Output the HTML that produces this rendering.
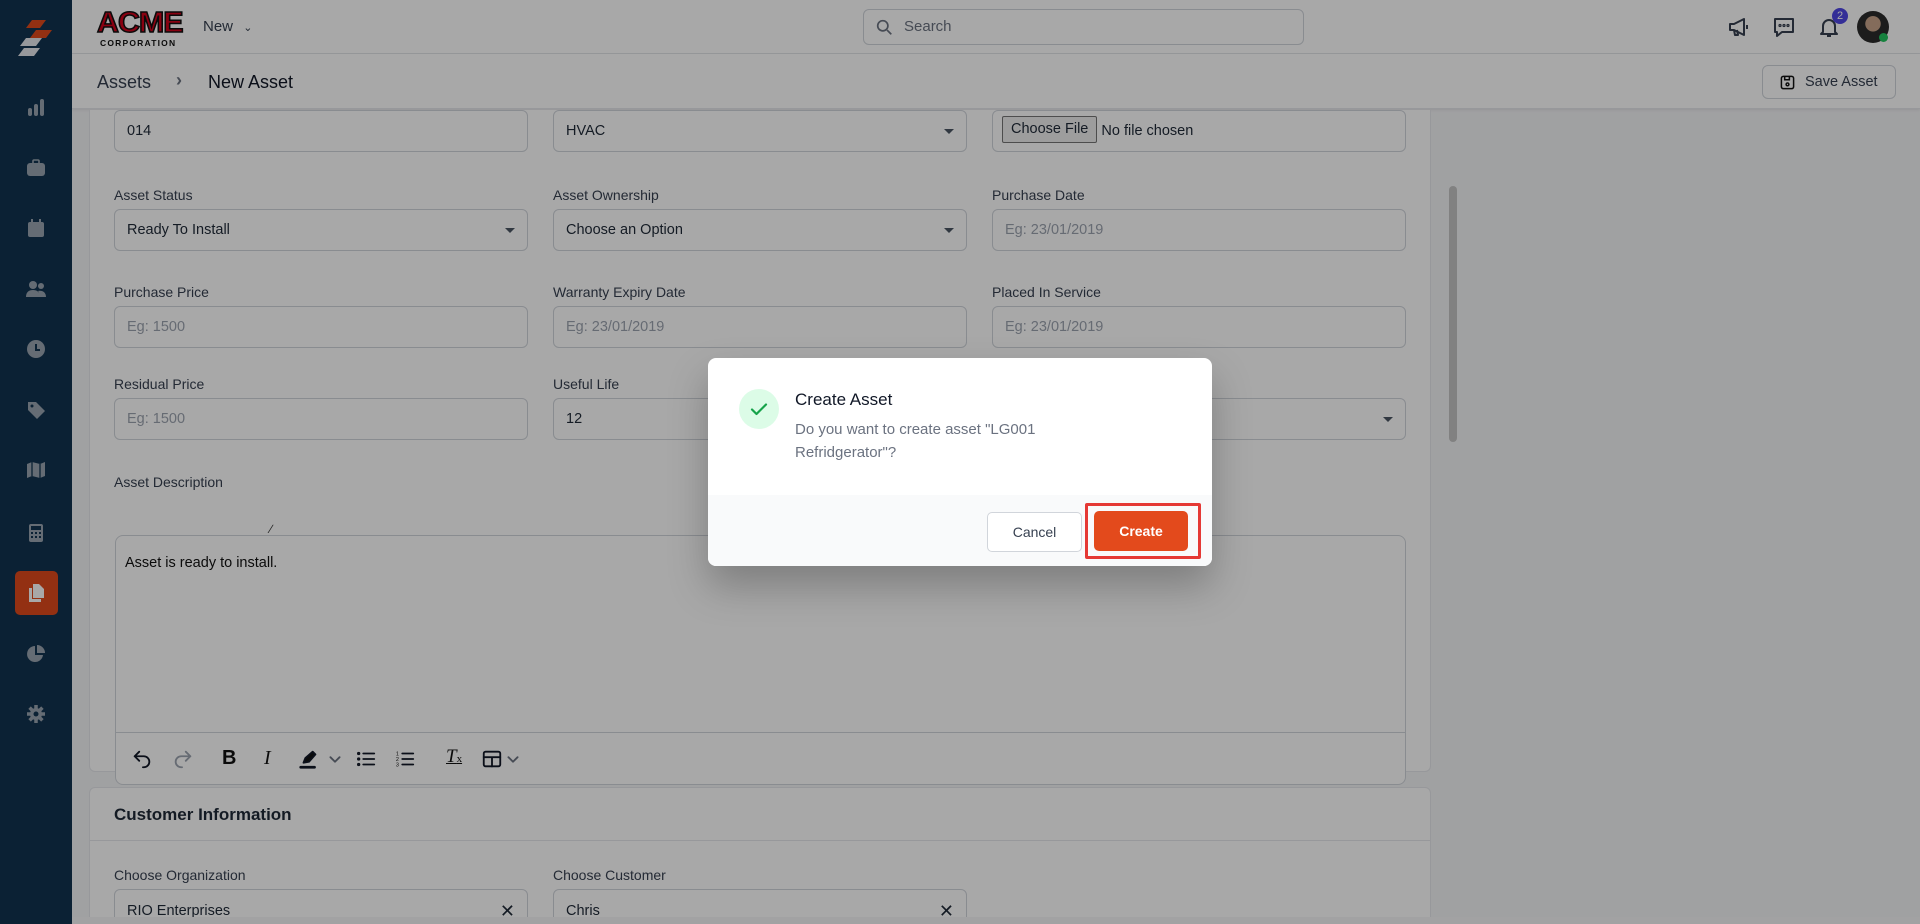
<!DOCTYPE html>
<html style="overflow:hidden;width:1920px;height:924px"><head><meta charset="utf-8">
<style>
*{box-sizing:border-box;margin:0;padding:0}
body{width:1920px;height:924px;overflow:hidden;background:#f3f4f6;font-family:"Liberation Sans",Arial,sans-serif;color:#1f2937}
#root{position:relative;width:1920px;height:924px;overflow:hidden}
.abs{position:absolute}
.side{left:0;top:0;width:72px;height:924px;background:#12334f}
.side svg{position:absolute;left:26px;width:20px;height:20px;fill:#9aa5b1}
.top{left:72px;top:0;width:1848px;height:54px;background:#fff;border-bottom:1px solid #e5e7eb}
.crumb{left:72px;top:54px;width:1848px;height:55px;background:#fff;border-bottom:1px solid #e5e7eb;box-shadow:0 1px 3px rgba(0,0,0,.08)}
.card{background:#fff;border:1px solid #e5e7eb;border-radius:6px}
.lbl{font-size:14px;color:#374151}
.inp{height:42px;border:1px solid #d1d5db;border-radius:6px;background:#fff;font-size:14.5px;padding-left:12px;line-height:40px;color:#1f2937}
.ph{color:#9ca3af}
.caret{position:absolute;right:12px;top:18px;width:0;height:0;border-left:5px solid transparent;border-right:5px solid transparent;border-top:5px solid #4b5563}
.ov{left:0;top:0;width:1920px;height:924px;background:rgba(0,0,0,.34)}
.tb svg{position:absolute;top:748px;width:22px;height:22px;fill:none;stroke:#111827;stroke-width:2;stroke-linecap:round;stroke-linejoin:round}
</style></head><body><div id="root">

<div class="abs side">
 <svg style="top:18px;left:16px;width:40px;height:40px" viewBox="0 0 40 40"><polygon points="16,2 30,2 24,10 10,10" fill="#e04a1c"/><polygon points="20,12 36,12 30,20 14,20" fill="#e04a1c"/><polygon points="10,20 26,20 20,28 4,28" fill="#e5e7eb"/><polygon points="8,30 24,30 18,38 2,38" fill="#e5e7eb"/></svg>
 <svg style="top:97px" viewBox="0 0 20 20"><rect x="2" y="11" width="4" height="8" rx="2"/><rect x="8" y="7" width="4" height="12" rx="2"/><rect x="14" y="2" width="4" height="17" rx="2"/></svg>
 <svg style="top:158px" viewBox="0 0 20 20"><rect x="1" y="5" width="18" height="13" rx="3"/><rect x="7" y="2" width="6" height="4" rx="1" fill="none" stroke="#9aa5b1" stroke-width="1.6"/></svg>
 <svg style="top:218px" viewBox="0 0 20 20"><rect x="2" y="4" width="16" height="15" rx="2"/><rect x="5" y="1" width="2" height="5"/><rect x="13" y="1" width="2" height="5"/></svg>
 <svg style="top:279px" viewBox="0 0 20 20"><circle cx="7" cy="6" r="4"/><circle cx="15" cy="7" r="3"/><path d="M0 18c0-5 3-7 7-7s7 2 7 7z"/><path d="M13 18c0-3 0-5 -1-6 4-1 8 1 8 6z"/></svg>
 <svg style="top:339px" viewBox="0 0 20 20"><circle cx="10" cy="10" r="9"/><path d="M10 5v6h4" stroke="#12334f" stroke-width="2" fill="none"/></svg>
 <svg style="top:400px" viewBox="0 0 20 20"><path d="M2 2h8l9 9-8 8-9-9z"/><circle cx="6" cy="6" r="1.5" fill="#12334f"/></svg>
 <svg style="top:460px" viewBox="0 0 20 20"><path d="M1 4l5-2 8 2 5-2v14l-5 2-8-2-5 2z"/><path d="M6 2v14M14 4v14" stroke="#12334f" stroke-width="1.3"/></svg>
 <svg style="top:523px" viewBox="0 0 20 20"><rect x="3" y="1" width="14" height="18" rx="2"/><rect x="5" y="3" width="10" height="4" fill="#12334f"/><g fill="#12334f"><rect x="5" y="9" width="2" height="2"/><rect x="9" y="9" width="2" height="2"/><rect x="13" y="9" width="2" height="2"/><rect x="5" y="13" width="2" height="2"/><rect x="9" y="13" width="2" height="2"/><rect x="13" y="13" width="2" height="2"/></g></svg>
 <div class="abs" style="left:15px;top:571px;width:43px;height:44px;background:#e04a1c;border-radius:5px"></div>
 <svg style="top:583px;fill:#fff" viewBox="0 0 20 20"><path d="M7 1h6l5 5v9H7z"/><path d="M3 5h3v11h9v3H3z"/></svg>
 <svg style="top:644px" viewBox="0 0 20 20"><path d="M9 2a8 8 0 1 0 8 9H9z"/><path d="M11 1a8 8 0 0 1 8 8h-8z"/></svg>
 <svg style="top:704px" viewBox="0 0 20 20"><circle cx="10" cy="10" r="6"/><g stroke="#9aa5b1" stroke-width="3.5"><path d="M10 1v18M1 10h18M3.6 3.6l12.8 12.8M16.4 3.6L3.6 16.4"/></g><circle cx="10" cy="10" r="2.5" fill="#12334f"/></svg>
</div>

<div class="abs top">
 <div class="abs" style="left:25px;top:9px;font:900 29px/29px 'Liberation Sans',sans-serif;color:#d0021b;letter-spacing:-1px;-webkit-text-stroke:1.5px #111;transform:scaleX(1.05);transform-origin:left">ACME</div>
 <div class="abs" style="left:28px;top:38px;font:900 8.5px 'Liberation Sans',sans-serif;color:#111;letter-spacing:1.2px">CORPORATION</div>
 <div class="abs" style="left:131px;top:18px;font-size:15px;color:#374151">New <span style="font-size:11px;margin-left:6px">&#8964;</span></div>
 <div class="abs" style="left:791px;top:9px;width:441px;height:36px;border:1px solid #d1d5db;border-radius:6px;background:#fff">
  <svg class="abs" style="left:12px;top:9px" width="17" height="17" viewBox="0 0 20 20" fill="none" stroke="#6b7280" stroke-width="2"><circle cx="8" cy="8" r="6"/><path d="M13 13l5 5"/></svg>
  <span class="abs" style="left:40px;top:8px;font-size:15px;color:#6b7280">Search</span>
 </div>
 <svg class="abs" style="left:1655px;top:15px" width="24" height="24" viewBox="0 0 24 24" fill="none" stroke="#374151" stroke-width="2" stroke-linejoin="round"><path d="M3 9h4l10-5v16L7 15H3z"/><path d="M7 15l1 5h3l-1-5M20 10v4"/></svg>
 <svg class="abs" style="left:1700px;top:15px" width="24" height="24" viewBox="0 0 24 24" fill="none" stroke="#374151" stroke-width="2" stroke-linejoin="round"><path d="M3 4h18v13H10l-5 4v-4H3z"/><circle cx="8" cy="10.5" r=".6"/><circle cx="12" cy="10.5" r=".6"/><circle cx="16" cy="10.5" r=".6"/></svg>
 <svg class="abs" style="left:1745px;top:15px" width="24" height="24" viewBox="0 0 24 24" fill="none" stroke="#374151" stroke-width="2" stroke-linejoin="round"><path d="M6 17V11a6 6 0 0 1 12 0v6l2 2H4z"/><path d="M10 21h4"/></svg>
 <div class="abs" style="left:1760px;top:8px;width:16px;height:16px;border-radius:50%;background:#4f46e5;color:#fff;font-size:11px;text-align:center;line-height:16px">2</div>
 <div class="abs" style="left:1785px;top:11px;width:32px;height:32px;border-radius:50%;background:radial-gradient(circle at 50% 40%,#c9a58a 0 30%,#2b2b2b 32%)"></div>
 <div class="abs" style="left:1807px;top:33px;width:9px;height:9px;border-radius:50%;background:#22c55e"></div>
</div>

<div class="abs crumb">
 <span class="abs" style="left:25px;top:18px;font-size:18px;color:#374151">Assets</span>
 <span class="abs" style="left:104px;top:16px;font-size:18px;color:#6b7280;font-weight:bold">&#8250;</span>
 <span class="abs" style="left:136px;top:18px;font-size:18px;color:#111827">New Asset</span>
 <div class="abs" style="left:1690px;top:11px;width:134px;height:34px;border:1px solid #d1d5db;border-radius:6px;background:#fff">
  <svg class="abs" style="left:17px;top:9px" width="15" height="15" viewBox="0 0 16 16" fill="none" stroke="#111" stroke-width="1.6"><rect x="1.5" y="1.5" width="13" height="13" rx="2"/><path d="M5 2v3h5V2"/><circle cx="8" cy="10" r="1.5"/></svg>
  <span class="abs" style="left:42px;top:8px;font-size:14.5px;color:#374151">Save Asset</span>
 </div>
</div>

<div class="abs" style="left:72px;top:110px;width:1848px;height:814px;overflow:hidden">
 <div class="abs card" style="left:17px;top:-20px;width:1342px;height:682px"></div>
 <div class="abs" style="left:1377px;top:76px;width:8px;height:256px;background:#c4c4c4;border-radius:4px"></div>
</div>
<div class="abs inp" style="left:114px;top:110px;width:414px">014</div>
<div class="abs inp" style="left:553px;top:110px;width:414px">HVAC<span class="caret"></span></div>
<div class="abs inp" style="left:992px;top:110px;width:414px;padding-left:9px"><span style="display:inline-block;border:1px solid #767676;background:#efefef;border-radius:2px;height:27px;line-height:25px;padding:0 8px;font-size:14.5px;vertical-align:middle;margin-top:-3px">Choose File</span> No file chosen</div>

<div class="abs lbl" style="left:114px;top:187px">Asset Status</div>
<div class="abs lbl" style="left:553px;top:187px">Asset Ownership</div>
<div class="abs lbl" style="left:992px;top:187px">Purchase Date</div>
<div class="abs inp" style="left:114px;top:209px;width:414px">Ready To Install<span class="caret"></span></div>
<div class="abs inp" style="left:553px;top:209px;width:414px">Choose an Option<span class="caret"></span></div>
<div class="abs inp ph" style="left:992px;top:209px;width:414px">Eg: 23/01/2019</div>

<div class="abs lbl" style="left:114px;top:284px">Purchase Price</div>
<div class="abs lbl" style="left:553px;top:284px">Warranty Expiry Date</div>
<div class="abs lbl" style="left:992px;top:284px">Placed In Service</div>
<div class="abs inp ph" style="left:114px;top:306px;width:414px">Eg: 1500</div>
<div class="abs inp ph" style="left:553px;top:306px;width:414px">Eg: 23/01/2019</div>
<div class="abs inp ph" style="left:992px;top:306px;width:414px">Eg: 23/01/2019</div>

<div class="abs lbl" style="left:114px;top:376px">Residual Price</div>
<div class="abs lbl" style="left:553px;top:376px">Useful Life</div>
<div class="abs inp ph" style="left:114px;top:398px;width:414px">Eg: 1500</div>
<div class="abs inp" style="left:553px;top:398px;width:414px">12</div>
<div class="abs inp" style="left:992px;top:398px;width:414px"><span class="caret"></span></div>

<div class="abs lbl" style="left:114px;top:474px">Asset Description</div>
<div class="abs" style="left:270px;top:522px;font-size:12px;color:#333">&#8725;</div>
<div class="abs" style="left:115px;top:535px;width:1291px;height:250px;border:1px solid #d1d5db;border-radius:8px;background:#fff">
 <div class="abs" style="left:9px;top:19px;font-size:14.5px;color:#111">Asset is ready to install.</div>
 <div class="abs" style="left:0;top:196px;width:100%;border-top:1px solid #d1d5db"></div>
</div>
<div class="tb">
 <svg style="left:131px" viewBox="0 0 24 24"><path d="M9 14L4 9l5-5"/><path d="M4 9h10a6 6 0 0 1 0 12h-1"/></svg>
 <svg style="left:172px;stroke:#9ca3af" viewBox="0 0 24 24"><path d="M15 14l5-5-5-5"/><path d="M20 9H10a6 6 0 0 0 0 12h1"/></svg>
 <div class="abs" style="left:222px;top:747px;font:bold 20px 'Liberation Sans';color:#111">B</div>
 <div class="abs" style="left:264px;top:747px;font:italic 20px 'Liberation Serif';color:#111">I</div>
 <svg style="left:298px" viewBox="0 0 24 24"><path d="M6 16l2-5 8-7 3 3-7 8z" fill="#111"/><path d="M3 21h15" stroke-width="3"/></svg>
 <svg style="left:328px;stroke:#6b7280;width:14px" viewBox="0 0 14 24"><path d="M2 10l5 5 5-5"/></svg>
 <svg style="left:355px" viewBox="0 0 24 24"><path d="M9 6h12M9 12h12M9 18h12"/><circle cx="4" cy="6" r=".8"/><circle cx="4" cy="12" r=".8"/><circle cx="4" cy="18" r=".8"/></svg>
 <svg style="left:394px" viewBox="0 0 24 24"><path d="M9 6h12M9 12h12M9 18h12"/><text x="2" y="8" font-size="6" fill="#111" stroke="none">1</text><text x="2" y="14" font-size="6" fill="#111" stroke="none">2</text><text x="2" y="20" font-size="6" fill="#111" stroke="none">3</text></svg>
 <div class="abs" style="left:446px;top:746px;font:italic 19px 'Liberation Serif';color:#111;text-decoration:underline">T<span style="font-size:11px;font-style:normal">x</span></div>
 <svg style="left:481px" viewBox="0 0 24 24"><rect x="3" y="4" width="18" height="16" rx="2"/><path d="M3 10h18M12 10v10" /></svg>
 <svg style="left:506px;stroke:#6b7280;width:14px" viewBox="0 0 14 24"><path d="M2 10l5 5 5-5"/></svg>
</div>

<div class="abs card" style="left:89px;top:787px;width:1342px;height:140px">
 <div class="abs" style="left:24px;top:17px;font-size:17px;font-weight:bold;color:#1f2937">Customer Information</div>
 <div class="abs" style="left:0;top:52px;width:100%;border-top:1px solid #e5e7eb"></div>
</div>
<div class="abs lbl" style="left:114px;top:867px">Choose Organization</div>
<div class="abs lbl" style="left:553px;top:867px">Choose Customer</div>
<div class="abs inp" style="left:114px;top:889px;width:414px;line-height:42px">RIO Enterprises<span class="abs" style="right:12px;top:0;font-size:18px">&#10005;</span></div>
<div class="abs inp" style="left:553px;top:889px;width:414px;line-height:42px">Chris<span class="abs" style="right:12px;top:0;font-size:18px">&#10005;</span></div>
<div class="abs" style="left:72px;top:917px;width:1848px;height:7px;background:#f6f6f7"></div>

<div class="abs ov"></div>

<div class="abs" style="left:708px;top:358px;width:504px;height:208px;background:#fff;border-radius:8px;box-shadow:0 20px 40px rgba(0,0,0,.25);overflow:hidden">
 <div class="abs" style="left:31px;top:31px;width:40px;height:40px;border-radius:50%;background:#dcfce7"></div>
 <svg class="abs" style="left:41px;top:41px" width="20" height="20" viewBox="0 0 20 20" fill="none" stroke="#16a34a" stroke-width="2.2" stroke-linecap="round" stroke-linejoin="round"><path d="M3 10.5l4.5 4.5L17 5.5"/></svg>
 <div class="abs" style="left:87px;top:32px;font-size:17px;color:#111827">Create Asset</div>
 <div class="abs" style="left:87px;top:60px;width:330px;font-size:15px;line-height:23px;color:#6b7280">Do you want to create asset "LG001 Refridgerator"?</div>
 <div class="abs" style="left:0;top:137px;width:504px;height:71px;background:#f9fafb"></div>
 <div class="abs" style="left:279px;top:154px;width:95px;height:40px;border:1px solid #d1d5db;border-radius:5px;background:#fff;font-size:14px;color:#374151;text-align:center;line-height:38px">Cancel</div>
 <div class="abs" style="left:377px;top:145px;width:116px;height:56px;border:3px solid #e53935;border-radius:2px"></div>
 <div class="abs" style="left:386px;top:153px;width:94px;height:40px;border-radius:5px;background:#e34a1c;font-size:14px;font-weight:bold;color:#fff;text-align:center;line-height:40px">Create</div>
</div>
</div></body></html>
